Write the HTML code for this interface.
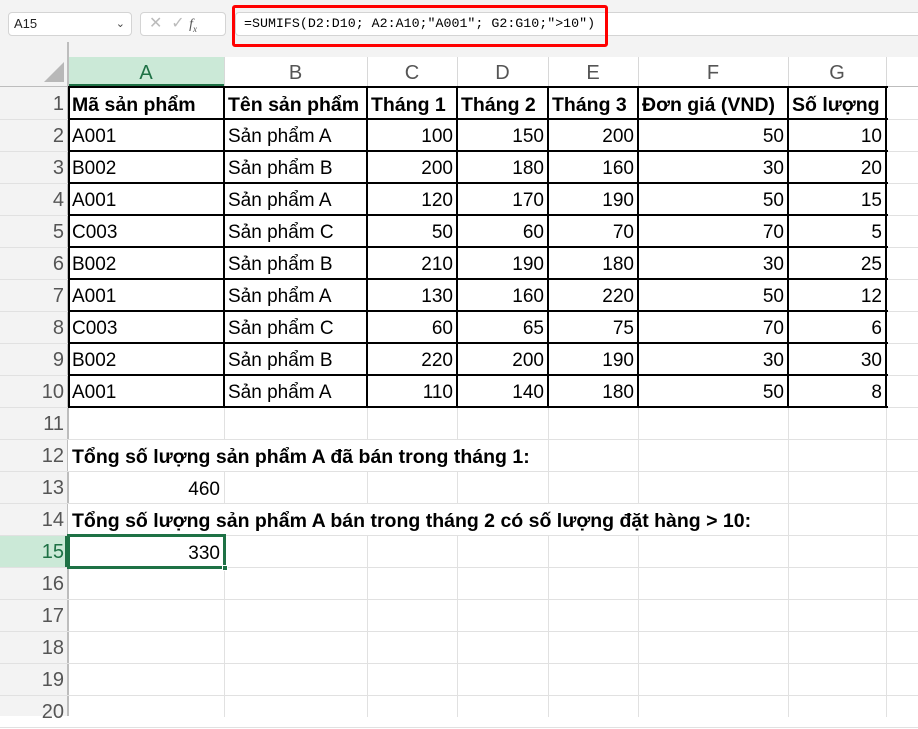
<!DOCTYPE html><html><head><meta charset="utf-8"><style>
body{margin:0;width:918px;height:716px;overflow:hidden;background:#fff;font-family:"Liberation Sans",sans-serif;position:relative}
.a{position:absolute;box-sizing:border-box}
.c{position:absolute;box-sizing:border-box;font-size:19px;line-height:36px;height:32px;color:#000;white-space:nowrap;padding:0 4px}
.r{text-align:right}
.b{font-weight:bold;font-size:19.5px}
.rh{position:absolute;left:0;width:64px;text-align:right;font-size:20px;color:#555;line-height:34px}
.ch{position:absolute;top:57px;height:30px;text-align:center;font-size:20px;color:#555;line-height:32px}
</style></head><body>
<div class="a" style="left:0;top:0;width:918px;height:57px;background:#f3f3f3"></div>
<div class="a" style="left:8px;top:12px;width:124px;height:24px;background:#fff;border:1px solid #d4d4d4;border-radius:4px;font-size:13px;line-height:22px;padding-left:5px;color:#222">A15<span style="position:absolute;right:6px;top:0;font-size:11px;color:#444">&#8964;</span></div>
<div class="a" style="left:140px;top:12px;width:86px;height:24px;background:#fff;border:1px solid #d4d4d4;border-radius:4px;color:#bbb;font-size:16px;line-height:22px;padding-left:8px">✕ &nbsp;✓ <span style="color:#555;font-style:italic;font-family:'Liberation Serif',serif;font-size:14px">f<sub style="font-size:9px">x</sub></span></div>
<div class="a" style="left:235px;top:12px;width:690px;height:24px;background:#fff;border:1px solid #d4d4d4;border-radius:4px"></div>
<div class="a" style="left:232px;top:5px;width:376px;height:42px;border:3px solid #f00;border-radius:3px"></div>
<div class="a" style="left:244px;top:12px;font-family:'Liberation Mono',monospace;font-size:13.3px;line-height:24px;color:#000">=SUMIFS(D2:D10; A2:A10;"A001"; G2:G10;"&gt;10")</div>
<div class="a" style="left:0;top:57px;width:68px;height:659px;background:#f3f3f3"></div>
<div class="a" style="left:67px;top:42px;width:2px;height:674px;background:#bdbdbd"></div>
<div class="a" style="left:0;top:86px;width:918px;height:1px;background:#bdbdbd"></div>
<svg class="a" style="left:44px;top:62px" width="20" height="20"><polygon points="20,0 20,20 0,20" fill="#b8b8b8"/></svg>
<div class="a" style="left:69px;top:57px;width:155px;height:29px;background:#cbe9d7;border-bottom:2px solid #1e7145"></div>
<div class="a" style="left:0;top:535px;width:67px;height:32px;background:#cbe9d7;border-right:2px solid #1e7145"></div>
<div id="g"></div>
<script>
var cols=[68,224,367,457,548,638,788,886,918],L="ABCDEFG",h='';
for(var i=0;i<7;i++){h+='<div class="ch" style="left:'+cols[i]+'px;width:'+(cols[i+1]-cols[i])+'px;'+(i==0?'color:#1e7145':'')+'">'+L[i]+'</div>';}
for(var i=1;i<8;i++){h+='<div class="a" style="left:'+cols[i]+'px;top:57px;width:1px;height:30px;background:#d8d8d8"></div>';h+='<div class="a" style="left:'+cols[i]+'px;top:87px;width:1px;height:630px;background:#e1e1e1"></div>';}
for(var n=1;n<=20;n++){var t=87+32*(n-1);h+='<div class="rh" style="top:'+t+'px;'+(n==15?'color:#1e7145':'')+'">'+n+'</div>';h+='<div class="a" style="left:0;top:'+(t+32)+'px;width:918px;height:1px;background:#e1e1e1"></div>';}
for(var n=0;n<=10;n++){var t=87+32*n;h+='<div class="a" style="left:68px;top:'+(t-1)+'px;width:820px;height:2px;background:#000"></div>';}
for(var i=0;i<8;i++){h+='<div class="a" style="left:'+(cols[i]-1+(i==0?1:0))+'px;top:86px;width:2px;height:322px;background:#000"></div>';}
var d=[["Mã sản phẩm","Tên sản phẩm","Tháng 1","Tháng 2","Tháng 3","Đơn giá (VND)","Số lượng"],
["A001","Sản phẩm A",100,150,200,50,10],["B002","Sản phẩm B",200,180,160,30,20],["A001","Sản phẩm A",120,170,190,50,15],["C003","Sản phẩm C",50,60,70,70,5],["B002","Sản phẩm B",210,190,180,30,25],["A001","Sản phẩm A",130,160,220,50,12],["C003","Sản phẩm C",60,65,75,70,6],["B002","Sản phẩm B",220,200,190,30,30],["A001","Sản phẩm A",110,140,180,50,8]];
for(var r=0;r<10;r++)for(var i=0;i<7;i++){var t=87+32*r;var num=typeof d[r][i]=='number';h+='<div class="c'+(num?' r':'')+(r==0?' b':'')+'" style="left:'+cols[i]+'px;top:'+t+'px;width:'+(cols[i+1]-cols[i])+'px">'+d[r][i]+'</div>';}
function tx(n,s,cls,w){var t=87+32*(n-1);return '<div class="c '+cls+'" style="left:68px;top:'+(t+1)+'px;height:31px;line-height:35px;'+(w?'width:'+w+'px;':'background:#fff;')+'">'+s+'</div>';}
h+=tx(12,'Tổng số lượng sản phẩm A đã bán trong tháng 1:','b');
h+=tx(13,'460','r',156);
h+=tx(14,'Tổng số lượng sản phẩm A bán trong tháng 2 có số lượng đặt hàng &gt; 10:','b');
h+=tx(15,'330','r',156);
h+='<div class="a" style="left:67px;top:534px;width:159px;height:35px;border:3px solid #1e7145"></div><div class="a" style="left:222px;top:565px;width:6px;height:6px;background:#1e7145;border:1px solid #fff"></div>';
document.getElementById('g').innerHTML=h;
</script>
</body></html>
